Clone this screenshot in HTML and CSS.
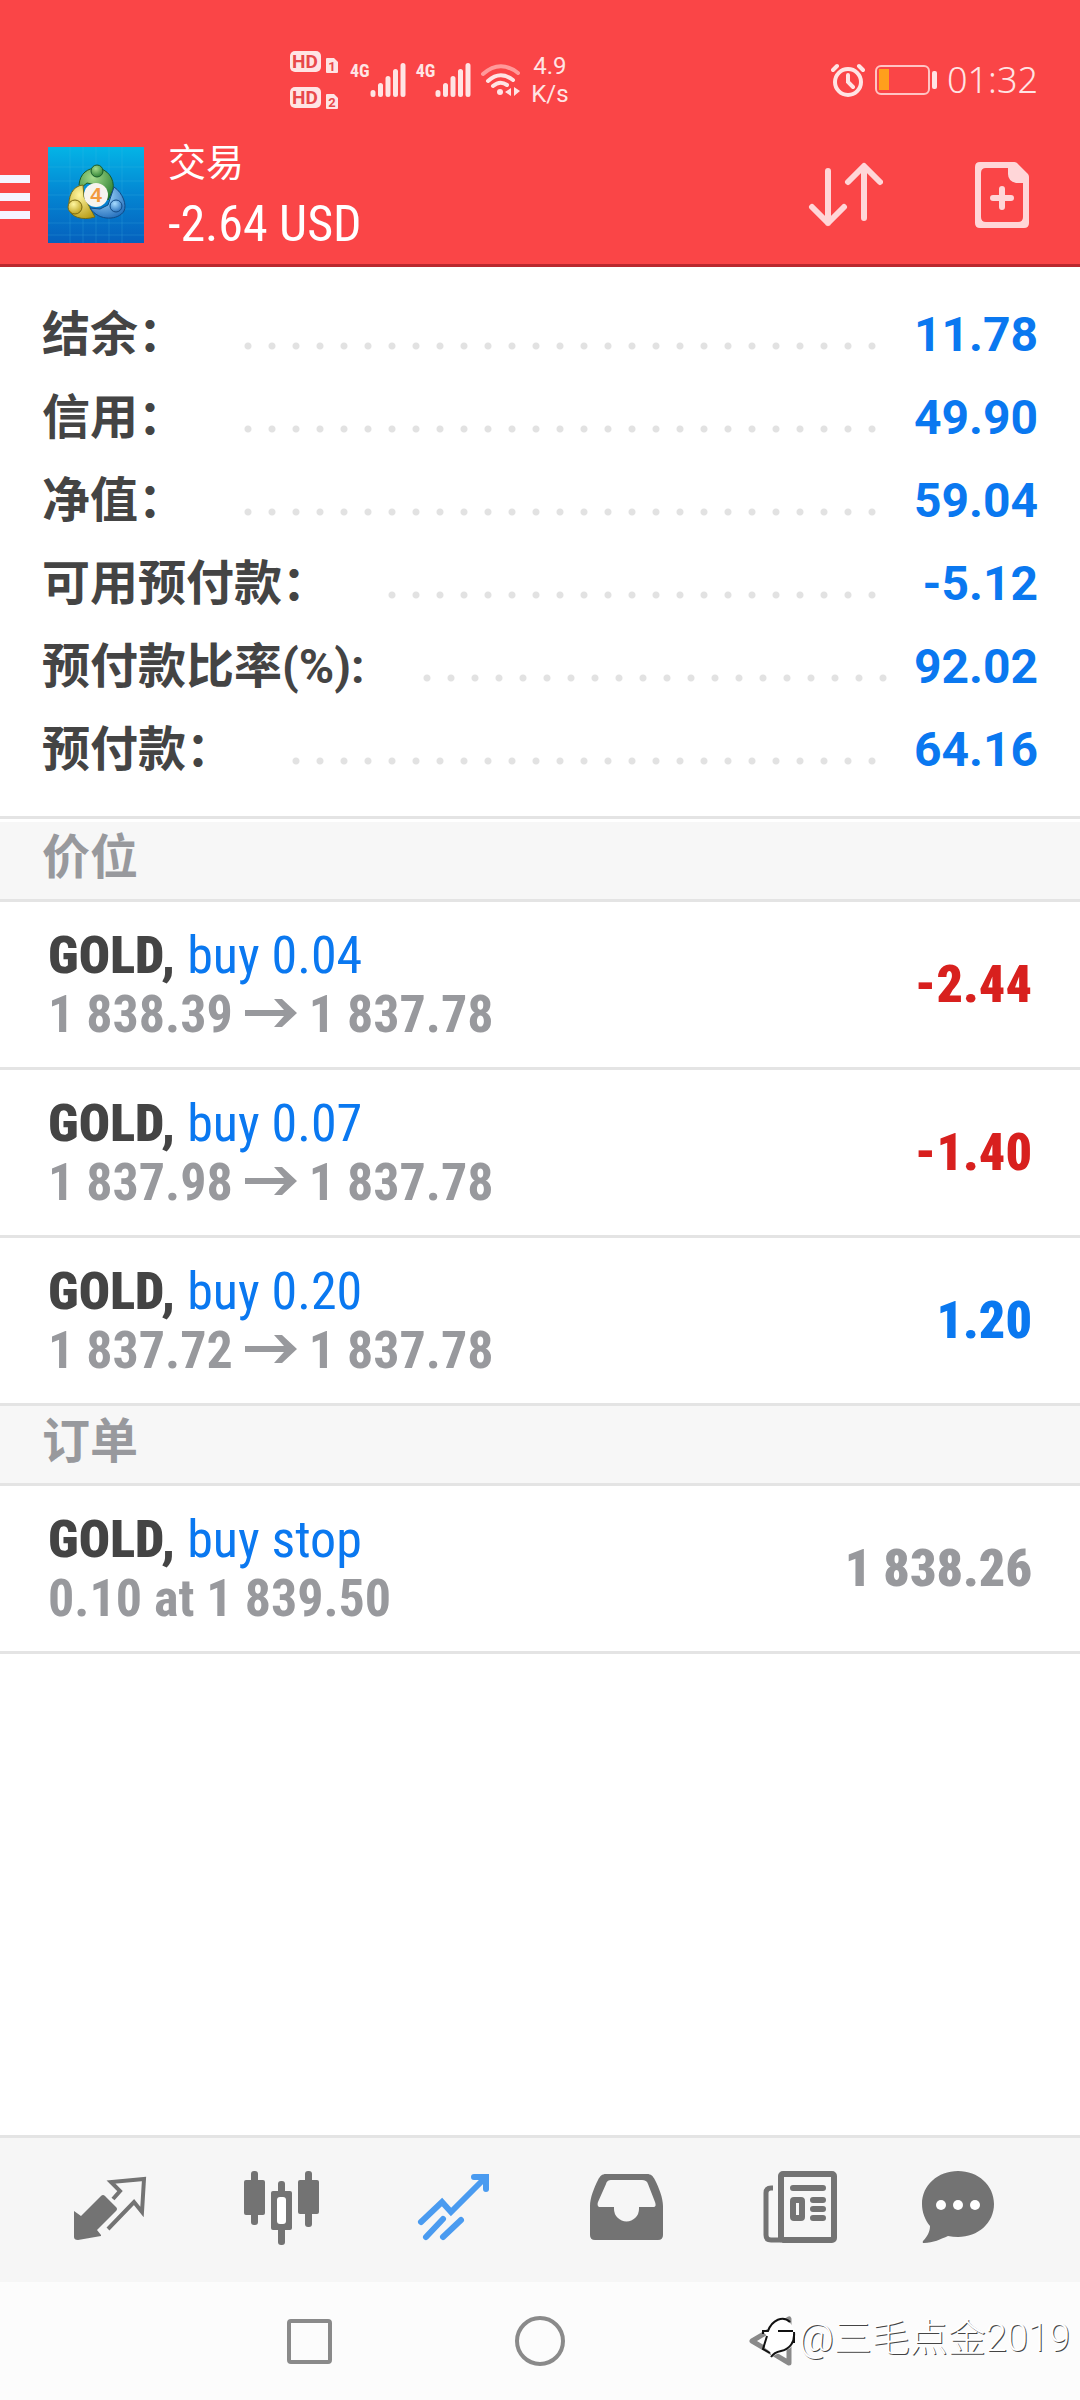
FILE: index.html
```html
<!DOCTYPE html>
<html lang="zh-CN">
<head>
<meta charset="utf-8">
<meta name="viewport" content="width=device-width, initial-scale=1">
<title>交易</title>
<link rel="stylesheet" href="styles.css">
</head>
<body>
<header class="top">
  <div class="status">
    <div class="status-left">
      <svg class="hd" width="50" height="60" viewBox="0 0 50 60" aria-hidden="true">
        <g fill="#ffe4e4">
          <rect x="0" y="1" width="31" height="21" rx="5"/>
          <rect x="0" y="37" width="31" height="21" rx="5"/>
          <path d="M36 9q0-1 1-1h7l4 4v10q0 1-1 1h-10q-1 0-1-1zM36 45q0-1 1-1h7l4 4v10q0 1-1 1h-10q-1 0-1-1z"/>
        </g>
        <g class="hd-text"><text x="15" y="18">HD</text><text x="15" y="54">HD</text></g>
        <g class="sim-text"><text x="42" y="21">1</text><text x="42" y="57">2</text></g>
      </svg>
      <div class="cell"><span class="gen">4G</span>
        <svg width="36" height="34" viewBox="0 0 36 34" aria-hidden="true"><path d="M3 29.500v2M10.500 22.500v9M18 15.500v16M25.500 8.500v23M33 2.500v29" stroke="#ffe4e4" stroke-width="5" stroke-linecap="round"/></svg>
      </div>
      <div class="cell"><span class="gen">4G</span>
        <svg width="36" height="34" viewBox="0 0 36 34" aria-hidden="true"><path d="M3 29.500v2M10.500 22.500v9M18 15.500v16M25.500 8.500v23M33 2.500v29" stroke="#ffe4e4" stroke-width="5" stroke-linecap="round"/></svg>
      </div>
      <svg class="wifi" width="40" height="34" viewBox="0 0 40 34" fill="none" stroke="#ffe4e4" stroke-width="4" stroke-linecap="round" aria-hidden="true">
        <path d="M2 11Q19-4 37 10" stroke="#ff9a9a"/>
        <path d="M7 18Q19 7 32 17M12 23Q19 17 26 22"/>
        <circle cx="19" cy="29" r="3" fill="#ffe4e4" stroke="none"/>
        <path d="M24 29l6-4v8zM39 28l-6-4v9z" fill="#ffe4e4" stroke="none"/>
      </svg>
      <div class="speed"><span>4.9</span><span>K/s</span></div>
    </div>
    <div class="status-right">
      <svg width="34" height="34" viewBox="0 0 34 34" fill="none" stroke="#ffe4e4" stroke-width="4" stroke-linecap="round" aria-hidden="true"><circle cx="17" cy="19" r="13"/><path d="M17 12v7l5 5M2 7l4-4M32 7l-4-4"/></svg>
      <svg width="62" height="30" viewBox="0 0 62 30" aria-hidden="true"><rect x="1" y="1" width="53" height="28" rx="5" fill="none" stroke="#ffc4c4" stroke-width="2"/><rect x="4" y="4" width="10" height="21" fill="#ff9f1c"/><rect x="57" y="6" width="5" height="18" rx="2" fill="#ffe4e4"/></svg>
      <time class="clock">01:32</time>
    </div>
  </div>
  <div class="bar">
    <button class="menu" type="button" aria-label="菜单"><i></i><i></i><i></i></button>
    <svg class="logo" width="96" height="96" viewBox="0 0 96 96" aria-hidden="true">
      <defs>
        <linearGradient id="sky" x1="0" y1="0" x2="0" y2="1"><stop offset="0" stop-color="#04b4e6"/><stop offset=".5" stop-color="#0485d2"/><stop offset="1" stop-color="#0560bd"/></linearGradient>
        <radialGradient id="gr" cx=".4" cy=".3" r=".8"><stop offset="0" stop-color="#a5db8c"/><stop offset="1" stop-color="#237a2c"/></radialGradient>
        <radialGradient id="ye" cx=".4" cy=".3" r=".8"><stop offset="0" stop-color="#fff6a0"/><stop offset="1" stop-color="#b69a12"/></radialGradient>
        <radialGradient id="bl" cx=".4" cy=".3" r=".8"><stop offset="0" stop-color="#a8dcff"/><stop offset="1" stop-color="#1b68b8"/></radialGradient>
      </defs>
      <rect width="96" height="96" fill="url(#sky)"/>
      <path d="M22 0v96M35 0v96M48 0v96M61 0v96M74 0v96M0 20h96M0 34h96M0 48h96M0 62h96M0 76h96M0 88h96" stroke="#4dc3ea" stroke-opacity=".22"/>
      <path d="M31 38C32 26 40 21 49 21C59 22 67 31 65 43L60 53L52 39L39 36L34 40Z" fill="url(#gr)" stroke="#195b2a"/>
      <path d="M35 38C24 39 20 50 21 61C22 70 34 74 47 70L41 59L36 50Z" fill="url(#ye)" stroke="#6b6a1c"/>
      <path d="M66 40C75 46 79 58 76 64C71 73 51 75 42 61L52 62L60 58Z" fill="url(#bl)" stroke="#124b86"/>
      <circle cx="49" cy="24" r="6" fill="url(#gr)" stroke="#195b2a"/>
      <circle cx="27" cy="60" r="7" fill="url(#ye)" stroke="#7b6a12"/>
      <circle cx="68" cy="59" r="6" fill="url(#bl)" stroke="#124b86"/>
      <circle cx="48" cy="48" r="12" fill="#f7f4ef"/>
      <text class="logo-num" x="48" y="55">4</text>
    </svg>
    <div class="titles"><h1>交易</h1><p>-2.64 USD</p></div>
    <button class="tool" type="button" aria-label="排序">
      <svg width="76" height="66" viewBox="0 0 76 66" fill="none" stroke="#ffd6d8" stroke-width="6" stroke-linecap="round" stroke-linejoin="round"><path d="M21 9v52M5 45l16 16 16-16M57 56V5M41 20L57 4l16 16"/></svg>
    </button>
    <button class="tool" type="button" aria-label="新订单">
      <svg width="54" height="66" viewBox="0 0 54 66"><path fill="#ffd6d8" fill-rule="evenodd" d="M5 0h33c2 0 3 0 4 1l10 10c2 2 2 3 2 5v45q0 5-5 5H5q-5 0-5-5V5q0-5 5-5zM11 6q-5 0-5 5v44q0 5 5 5h32q5 0 5-5V21h-7q-8-2-8-9V6z"/><path d="M27 27v18M18 36h18" stroke="#ffd6d8" stroke-width="6" stroke-linecap="round"/></svg>
    </button>
  </div>
</header>

<main>
  <dl class="summary">
    <div class="sum-row"><dt>结余：</dt><dd>11.78</dd></div>
    <div class="sum-row"><dt>信用：</dt><dd>49.90</dd></div>
    <div class="sum-row"><dt>净值：</dt><dd>59.04</dd></div>
    <div class="sum-row"><dt>可用预付款：</dt><dd>-5.12</dd></div>
    <div class="sum-row"><dt>预付款比率(%):</dt><dd>92.02</dd></div>
    <div class="sum-row"><dt>预付款：</dt><dd>64.16</dd></div>
  </dl>

  <h2 class="section">价位</h2>
  <ul class="deals">
    <li><div><p class="name"><b>GOLD,</b> <span>buy 0.04</span></p><p class="price">1 838.39 <svg class="arrow" width="52" height="30" viewBox="0 0 52 30" role="img" aria-label="→"><path d="M0 12h39L29 1h8l15 14-15 14h-8l10-11H0z"/></svg> 1 837.78</p></div><strong class="loss">-2.44</strong></li>
    <li><div><p class="name"><b>GOLD,</b> <span>buy 0.07</span></p><p class="price">1 837.98 <svg class="arrow" width="52" height="30" viewBox="0 0 52 30" role="img" aria-label="→"><path d="M0 12h39L29 1h8l15 14-15 14h-8l10-11H0z"/></svg> 1 837.78</p></div><strong class="loss">-1.40</strong></li>
    <li><div><p class="name"><b>GOLD,</b> <span>buy 0.20</span></p><p class="price">1 837.72 <svg class="arrow" width="52" height="30" viewBox="0 0 52 30" role="img" aria-label="→"><path d="M0 12h39L29 1h8l15 14-15 14h-8l10-11H0z"/></svg> 1 837.78</p></div><strong class="gain">1.20</strong></li>
  </ul>

  <h2 class="section">订单</h2>
  <ul class="deals">
    <li><div><p class="name"><b>GOLD,</b> <span>buy stop</span></p><p class="price">0.10 at 1 839.50</p></div><strong class="quote">1 838.26</strong></li>
  </ul>
</main>

<nav class="tabs">
  <button type="button" aria-label="行情"><svg width="96" height="84" viewBox="0 0 96 84"><path fill="#737373" d="M12 43l7 5 20-20q2-2 4 0l11 11q2 2 0 4L35 62l4 5v1l-23 4q-4 0-4-3z"/><path d="M51 31l7-8-9-9 33-3-2 33-8-10-26 27" fill="none" stroke="#737373" stroke-width="4"/></svg></button>
  <button type="button" aria-label="图表"><svg width="96" height="84" viewBox="0 0 96 84"><g fill="#737373"><rect x="17" y="3" width="7" height="54" rx="3"/><rect x="10" y="12" width="21" height="35" rx="2"/><rect x="44" y="13" width="7" height="64" rx="3"/><rect x="37" y="23" width="21" height="39" rx="2"/><rect x="71" y="3" width="7" height="56" rx="3"/><rect x="64" y="12" width="21" height="34" rx="2"/></g><rect x="43" y="29" width="9" height="27" rx="3" fill="#fff"/></svg></button>
  <button type="button" aria-label="交易" aria-current="page"><svg width="96" height="84" viewBox="0 0 96 84"><path d="M15 54l21-20 9 10 34-34M68 9h12v12M20 69l17-18M37 69l18-17" fill="none" stroke="#4a9bf0" stroke-width="6" stroke-linecap="round"/><path fill="#4a9bf0" d="M70 8h13v14z"/></svg></button>
  <button type="button" aria-label="历史"><svg width="96" height="84" viewBox="0 0 96 84"><path fill="#737373" fill-rule="evenodd" d="M28 6h41c4 0 6 2 8 6 4 8 8 18 8 26v29q0 5-5 5H17q-5 0-5-5V38c0-8 4-18 8-26 2-4 4-6 8-6zM34 12c-4 0-5 1-6 4l-8 18c-1 3 0 5 2 5h14v2a12 12 0 0 0 25 0v-2h14c3 0 3-2 2-5l-7-18c-1-3-3-4-6-4z"/></svg></button>
  <button type="button" aria-label="新闻"><svg width="96" height="84" viewBox="0 0 96 84" fill="none" stroke="#737373" stroke-width="6"><rect x="31" y="6" width="53" height="66" rx="2"/><path d="M23 20h-2q-5 0-5 5v42q0 5 5 5h10" stroke-width="5"/><path d="M43 20h30M63 32h10M63 41h10M63 50h10" stroke-linecap="round"/><rect x="43" y="32" width="9" height="18" rx="1"/></svg></button>
  <button type="button" aria-label="消息"><svg width="96" height="84" viewBox="0 0 96 84"><path fill="#737373" d="M36 3c20 0 36 14 36 33S56 69 36 69q-5 0-10-1c-7 3-15 7-24 7q-2 0-1-2c4-4 7-9 7-15C3 52 0 44 0 36 0 17 16 3 36 3z"/><g fill="#fff"><circle cx="19" cy="37" r="5"/><circle cx="36" cy="37" r="5"/><circle cx="53" cy="37" r="5"/></g></svg></button>
</nav>

<footer class="system">
  <button type="button" aria-label="最近任务"><svg width="56" height="56" viewBox="0 0 56 56" fill="none" stroke="#8a8a8a" stroke-width="4"><rect x="7" y="8" width="41" height="41" rx="2"/></svg></button>
  <button type="button" aria-label="主屏幕"><svg width="56" height="56" viewBox="0 0 56 56" fill="none" stroke="#8a8a8a" stroke-width="4"><circle cx="28" cy="28" r="23"/></svg></button>
  <button type="button" aria-label="返回"><svg width="56" height="56" viewBox="0 0 56 56" fill="none" stroke="#8a8a8a" stroke-width="5" stroke-linejoin="round"><path d="M10 28L47 6v44z"/></svg></button>
  <div class="mark">
    <svg width="36" height="44" viewBox="0 0 36 44" aria-hidden="true"><path d="M8 14C11 4 22 0 28 6C36 12 36 30 26 34C19 37 14 38 10 42C11 38 9 35 4 32C4 26 8 20 3 17Q4 13 8 14z" fill="#fff"/><path d="M2 18v-3h5C11 4 22-1 29 6M17 15h15M6 20l-4 13 7 4M33 16C34 26 29 33 20 35 15 36 12 38 10 41M33 18v9" fill="none" stroke="#111" stroke-width="2"/></svg>
    <span>@三毛点金2019</span>
  </div>
</footer>
</body>
</html>
```
FILE: styles.css
```css
* { box-sizing: border-box; }

body {
  margin: 0;
  min-height: 100vh;
  display: flex;
  flex-direction: column;
  background: #fff;
  color: #444;
  font-family: Roboto, "Noto Sans CJK SC", sans-serif;
}

h1, h2, p, ul, dl, dd { margin: 0; padding: 0; }
ul { list-style: none; }
svg { display: block; flex: none; }

button {
  display: flex;
  align-items: center;
  justify-content: center;
  padding: 0;
  border: 0;
  background: none;
}

/* Header */
.top {
  background: #fa4547;
  border-bottom: 3px solid #b9282e;
  color: #fff;
}

.status {
  display: flex;
  justify-content: space-between;
  align-items: center;
  height: 126px;
  padding: 34px 42px 0 290px;
  color: #ffe4e4;
}

.status-left, .status-right { display: flex; align-items: center; }
.status-left { gap: 10px; }
.status-right { gap: 10px; }
.hd-text { font: 700 19px Roboto, sans-serif; fill: #e8484a; text-anchor: middle; }
.sim-text { font: 700 13px Roboto, sans-serif; fill: #e8484a; text-anchor: middle; }
.cell { display: flex; align-items: flex-start; }
.gen { font: 700 18px/16px "Roboto Condensed", "Liberation Sans Narrow", sans-serif; }
.speed {
  display: flex;
  flex-direction: column;
  align-items: center;
  font-size: 24px;
  line-height: 28px;
}
.clock { font: 300 36px/40px "Noto Sans", sans-serif; }

.bar {
  display: flex;
  align-items: center;
  height: 138px;
  padding-right: 51px;
}

.menu {
  flex-direction: column;
  gap: 10px;
  width: 30px;
  margin-right: 18px;
  padding-top: 4px;
}
.menu i { width: 30px; height: 8px; background: #f5f3ff; }

.logo-num {
  font: 700 21px "Liberation Sans", sans-serif;
  fill: #f29a3e;
  text-anchor: middle;
}

.titles {
  flex: 1;
  display: flex;
  flex-direction: column;
  gap: 6px;
  margin-left: 24px;
}
.titles h1 {
  font: 400 38px/52px "Noto Sans CJK SC", sans-serif;
}
.titles p {
  font: 400 50px/64px "Roboto Condensed", "Liberation Sans Narrow", sans-serif;
}
.tool { margin-left: 92px; }

/* Account summary */
.summary {
  padding: 26px 42px 25px;
  border-bottom: 3px solid #e4e4e4;
  margin-bottom: 3px;
}
.sum-row { display: flex; align-items: center; height: 83px; }
.sum-row dt {
  font: 700 48px/83px Roboto, "Noto Sans CJK SC", sans-serif;
}
.sum-row::after {
  content: "";
  order: 1;
  flex: 1;
  align-self: flex-end;
  height: 8px;
  margin: 0 0 26px 58px;
  background: radial-gradient(circle at 4px 4px, #e2e2e2 3px, transparent 4px) 0 0 / 24px 8px repeat-x;
}
.sum-row dd {
  order: 2;
  width: 148px;
  text-align: right;
  font-size: 48px;
  font-weight: 700;
  color: #0a78f0;
}

/* Deal lists */
.section {
  padding: 0 42px 15px;
  background: #f7f7f7;
  border-bottom: 3px solid #e4e4e4;
  color: #98999d;
  font: 700 48px/62px "Noto Sans CJK SC", sans-serif;
}

.deals li {
  display: flex;
  align-items: center;
  justify-content: space-between;
  height: 168px;
  padding: 0 48px;
  border-bottom: 3px solid #e4e4e4;
  font: 700 52px/59px "Roboto Condensed", "Liberation Sans Narrow", sans-serif;
}
.name span { font-weight: 400; color: #0a78f0; }
.price, .quote { color: #98999d; }
.arrow { display: inline-block; vertical-align: 4px; fill: #98999d; }
.loss { color: #d8201e; }
.gain { color: #0a78f0; }

/* Bottom navigation */
main { flex: 1; }
.tabs {
  display: flex;
  height: 147px;
  padding: 0 24px;
  background: #f6f6f6;
  border-top: 3px solid #e4e4e4;
}
.tabs button { flex: 1; }

.system {
  position: relative;
  display: flex;
  justify-content: center;
  gap: 174px;
  height: 118px;
  background: #fcfcfc;
}

/* Author mark, laid over the system bar */
.mark {
  position: absolute;
  right: 10px;
  top: 31px;
  display: flex;
  align-items: center;
  gap: 2px;
  color: #fff;
  font: 300 38px/50px Roboto, "Noto Sans CJK SC", sans-serif;
  text-shadow: 1px 1px 0 #444;
}
```
